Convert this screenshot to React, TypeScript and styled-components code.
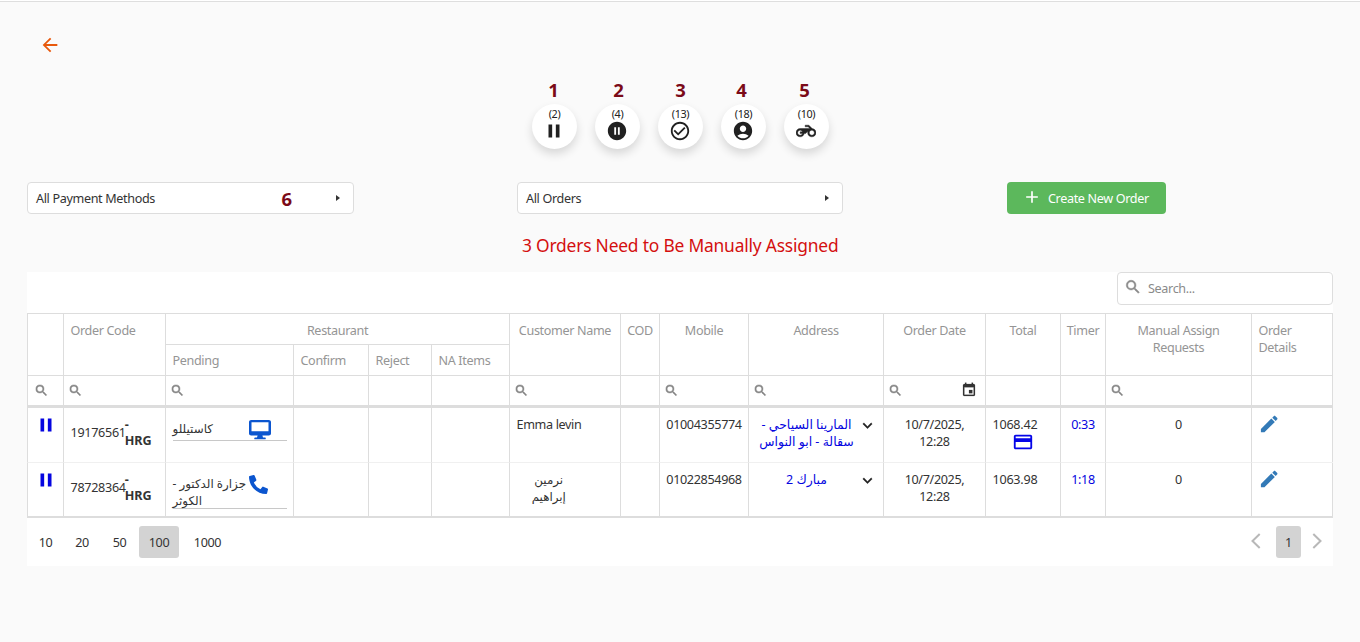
import React from "react";
import styled, { createGlobalStyle } from "styled-components";
import {
  MdPause, MdPauseCircleFilled, MdCheckCircleOutline, MdAccountCircle,
  MdArrowBack, MdSearch, MdEvent, MdOutlineCreditCard, MdExpandMore, MdAdd,
} from "react-icons/md";
import { FaPhoneAlt } from "react-icons/fa";

const Global = createGlobalStyle`
  * { box-sizing: border-box; }
  body { margin: 0; background: #fafafa; }
  svg path[fill="none"] { stroke: none; }
`;

const Page = styled.div`
  height: 642px;
  padding: 0 27px;
  display: flex;
  flex-direction: column;
  background: #fafafa;
  border-top: 1px solid #fff;
  box-shadow: inset 0 1px 0 #dedede;
  overflow: hidden;
  color: #333;
  font: 12.6px/17px "Noto Sans", "DejaVu Sans", sans-serif;
  letter-spacing: -0.35px;
`;

const Back = styled.button`
  align-self: flex-start;
  display: flex;
  margin: 33px 0 0 12px;
  padding: 0;
  border: 0;
  background: none;
  color: #e8590c;
`;

const Statuses = styled.div`
  display: flex;
  gap: 18px;
  margin: 22px 0 0 505px;
`;

const Status = styled.div`
  display: flex;
  flex-direction: column;
  align-items: center;
  width: 45px;
`;

const Mark = styled.span<{ $shift?: number }>`
  font: 700 18.5px/24px "Noto Sans", sans-serif;
  letter-spacing: 0;
  color: #7b0a18;
  position: relative;
  left: ${(p) => p.$shift || 0}px;
`;

const Circle = styled.div`
  display: flex;
  flex-direction: column;
  align-items: center;
  width: 45px;
  height: 45px;
  margin-top: 2px;
  padding-top: 4px;
  border-radius: 50%;
  background: #fff;
  box-shadow: 0 5px 10px rgba(0, 0, 0, 0.14);
  color: #212121;
  font-size: 10.8px;
  line-height: 12px;
  svg { flex: none; margin-right: 1px; }
`;

const Filters = styled.div`
  display: flex;
  align-items: center;
  margin-top: 33px;
`;

const Select = styled.div<{ $width: number; $after: number }>`
  display: flex;
  align-items: center;
  width: ${(p) => p.$width}px;
  height: 32px;
  margin-right: ${(p) => p.$after}px;
  padding: 0 13px 0 8px;
  border: 1px solid #ddd;
  border-radius: 4px;
  background: #fff;
  ${Mark} { margin-right: 44px; padding-top: 2px; }
`;

const Grow = styled.span`
  flex: 1;
`;

const Caret = styled.i`
  border: 3.5px solid transparent;
  border-left: 4px solid #333;
  border-right: 0;
`;

const Create = styled.button`
  display: flex;
  align-items: center;
  gap: 6px;
  width: 159px;
  height: 32px;
  padding: 0 0 0 15px;
  border: 0;
  border-radius: 4px;
  background: #5cb85c;
  color: #fff;
  font: inherit;
  letter-spacing: inherit;
  svg { margin-top: -3px; }
`;

const Alert = styled.h1`
  margin: 19px 0 14px 495px;
  font-size: 17.4px;
  font-weight: 400;
  line-height: 25px;
  letter-spacing: -0.2px;
  color: #d40f0f;
`;

const Panel = styled.section`
  width: 1306px;
  background: #fff;
`;

const Tools = styled.div`
  display: flex;
  justify-content: flex-end;
  height: 41px;
`;

const SearchBox = styled.label`
  display: flex;
  align-items: center;
  gap: 6px;
  width: 216px;
  height: 33px;
  padding-left: 6px;
  border: 1px solid #ddd;
  border-radius: 4px;
  color: #8a8a8a;
  svg { margin-top: -4px; stroke: currentColor; stroke-width: 0.6; }
`;

const Table = styled.div`
  display: grid;
  grid-template-columns: 36px 102px 128px 75px 63px 78px 111px 39px 89px 135px 102px 75px 45px 146px 82px;
  grid-template-rows: 31px 31px 29px 57px 54px;
  border-top: 1px solid #ddd;
  border-bottom: 2px solid #ddd;
  border-right: 1px solid #ddd;
  width: 1306px;
`;

const Head = styled.div<{ $rows?: number; $cols?: number; $align?: string; $sub?: boolean }>`
  grid-row: span ${(p) => p.$rows || 1};
  grid-column: span ${(p) => p.$cols || 1};
  padding: ${(p) => (p.$sub ? 7 : 8)}px 5px 0 ${(p) => (p.$align ? 6.5 : 5)}px;
  border-left: 1px solid #ddd;
  border-bottom: 1px solid #ddd;
  color: #959595;
  text-align: ${(p) => p.$align || "center"};
`;

const Filter = styled.div`
  display: flex;
  align-items: center;
  justify-content: space-between;
  padding: 0 8px 0 4px;
  border-left: 1px solid #ddd;
  color: #858585;
  svg { stroke: currentColor; stroke-width: 0.7; }
  svg + svg { color: #333; stroke-width: 0.3; margin-top: -1px; }
  &:nth-child(17) { padding-left: 6px; }
`;

const Cell = styled.div<{ $first: boolean; $align?: string; $blue?: boolean; $raise?: boolean }>`
  padding: ${(p) => 8 - (p.$raise ? 2 : 0)}px ${(p) => (p.$align ? 5 : 6)}px 0 ${(p) => (p.$align ? 6.5 : 6)}px;
  border-left: 1px solid #ddd;
  ${(p) => (p.$first ? "border-top: 3px solid #ddd;" : "border-top: 1px solid #f0f0f0;")}
  text-align: ${(p) => p.$align || "center"};
  color: ${(p) => (p.$blue ? "#0505e0" : "#333")};
  white-space: nowrap;
`;

const Code = styled.div`
  display: flex;
  padding-top: 8px;
  letter-spacing: -0.3px;
  b { margin: -7px 0 0 -1px; line-height: 16px; width: 28px; letter-spacing: -0.1px; }
`;

const Vendor = styled.div<{ $lines: number }>`
  display: flex;
  justify-content: space-between;
  height: ${(p) => (p.$lines > 1 ? 38 : 25)}px;
  margin-right: 1px;
  padding: 4px 16px 0 0;
  border-bottom: 1px solid #c8c8c8;
  svg { color: #0b55cf; flex: none; }
`;

const Arabic = styled.span<{ $size?: number }>`
  font-family: "Noto Sans", "DejaVu Sans", sans-serif;
  font-size: ${(p) => p.$size || 11.9}px;
  letter-spacing: 0;
`;

const AddressRow = styled.div`
  display: flex;
  justify-content: space-between;
  ${Arabic} { flex: 1; }
  svg { color: #222; stroke: currentColor; stroke-width: 0.3; }
`;

const Customer = styled.div`
  padding-right: 34px;
`;

const Total = styled.div`
  display: flex;
  flex-direction: column;
  letter-spacing: -0.25px;
  svg { margin: -2px 0 0 19px; color: #0505e8; }
`;

const Footer = styled.footer`
  display: flex;
  align-items: center;
  height: 48px;
`;

const PageButton = styled.span<{ $width: number; $on?: boolean }>`
  display: flex;
  align-items: center;
  justify-content: center;
  width: ${(p) => p.$width}px;
  height: 32px;
  border-radius: 3px;
  background: ${(p) => (p.$on ? "#d3d3d3" : "transparent")};
  svg { margin-top: -3px; }
`;

const Chevron = ({ left = false }) => (
  <svg width="10" height="16" viewBox="0 0 10 16" fill="none" stroke="#b8b8b8" strokeWidth="2">
    <path d={left ? "M8.7 1L1.5 8l7.2 7" : "M1.3 1L8.5 8l-7.2 7"} />
  </svg>
);

const Motorcycle = () => (
  <svg width="20" height="22" viewBox="0 0 24 24" fill="currentColor" stroke="currentColor" strokeWidth="0.5">
    <path d="M19.44 9.03L15.41 5H11v2h3.59l2 2H5c-2.8 0-5 2.2-5 5s2.2 5 5 5c2.46 0 4.45-1.69 4.9-4h1.65l2.77-2.77c-.21.54-.32 1.14-.32 1.77 0 2.8 2.2 5 5 5s5-2.2 5-5c0-2.65-1.97-4.77-4.56-4.97zM7.82 15C7.4 16.15 6.28 17 5 17c-1.63 0-3-1.37-3-3s1.37-3 3-3c1.28 0 2.4.85 2.82 2H5v2h2.82zM19 17c-1.66 0-3-1.34-3-3s1.34-3 3-3 3 1.34 3 3-1.34 3-3 3z" />
  </svg>
);

const Monitor = () => (
  <svg width="22" height="20" viewBox="0 0 22 20" fill="currentColor">
    <path fillRule="evenodd" d="M2.2 0h17.6C21 0 22 .9 22 2v11.5c0 1.1-1 2-2.2 2H13.400l.6 2h1.800c.6 0 1 .4 1 .9s-.4.9-1 .9H6.200c-.6 0-1-.4-1-.9s.4-.9 1-.9H8l.6-2H2.200C1 15.500 0 14.600 0 13.500V2C0 .9 1 0 2.200 0zM2.500 2.200v9h17v-9z" />
  </svg>
);

const Phone = () => <FaPhoneAlt size={19} style={undefined} />;

const Pencil = () => (
  <svg width="21" height="21" viewBox="0 0 22 22" fill="#337ab7">
    <path d="M2 15.600L12.900 4.800l3.700 3.600L5.700 19.200H2zM13.900 3.800l1.500-1.500c.6-.6 1.200-.6 1.800 0l1.700 1.700c.6.6.6 1.200 0 1.800l-1.400 1.500z" />
  </svg>
);

const VendorRow = styled(Vendor)`
  padding-right: ${(p) => (p.$lines > 1 ? 19 : 16)}px;
`;

const statuses = [
  { n: 1, count: 2, icon: <MdPause size={22} />, shift: -1 },
  { n: 2, count: 4, icon: <MdPauseCircleFilled size={22} />, shift: 1 },
  { n: 3, count: 13, icon: <MdCheckCircleOutline size={22} />, shift: 0 },
  { n: 4, count: 18, icon: <MdAccountCircle size={22} />, shift: -2 },
  { n: 5, count: 10, icon: <Motorcycle />, shift: -2 },
];

const filters = [1, 1, 1, 0, 0, 0, 1, 0, 1, 1, 2, 0, 0, 1, 0];

const orders = [
  {
    code: "19176561", vendor: ["كاستيللو"], Contact: Monitor, customer: <>Emma levin</>, left: true,
    mobile: "01004355774", address: ["المارينا السياحي -", "سقالة - ابو النواس"], total: "1068.42", card: true, timer: "0:33",
  },
  {
    code: "78728364", vendor: ["جزارة الدكتور -", "الكوثر"], Contact: Phone,
    customer: <Customer><Arabic dir="rtl">نرمين<br />إبراهيم</Arabic></Customer>, left: false,
    mobile: "01022854968", address: ["مبارك 2"], total: "1063.98", card: false, timer: "1:18",
  },
];

const lines = (items: string[]) => items.map((t, i) => <React.Fragment key={t}>{i > 0 && <br />}{t}</React.Fragment>);

export default function App() {
  return (
    <Page>
      <Global />
      <Back aria-label="Back"><MdArrowBack size={22} /></Back>
      <Statuses>
        {statuses.map(({ n, count, icon, shift }) => (
          <Status key={n}>
            <Mark $shift={shift}>{n}</Mark>
            <Circle>({count}){icon}</Circle>
          </Status>
        ))}
      </Statuses>
      <Filters>
        <Select $width={327} $after={163}>All Payment Methods<Grow /><Mark>6</Mark><Caret /></Select>
        <Select $width={326} $after={164}>All Orders<Grow /><Caret /></Select>
        <Create><MdAdd size={20} />Create New Order</Create>
      </Filters>
      <Alert>3 Orders Need to Be Manually Assigned</Alert>
      <Panel>
        <Tools><SearchBox><MdSearch size={18} />Search...</SearchBox></Tools>
        <Table>
          <Head $rows={2} />
          <Head $rows={2} $align="left">Order Code</Head>
          <Head $cols={4}>Restaurant</Head>
          <Head $rows={2}>Customer Name</Head>
          <Head $rows={2}>COD</Head>
          <Head $rows={2}>Mobile</Head>
          <Head $rows={2}>Address</Head>
          <Head $rows={2}>Order Date</Head>
          <Head $rows={2}>Total</Head>
          <Head $rows={2}>Timer</Head>
          <Head $rows={2}>Manual Assign<br />Requests</Head>
          <Head $rows={2} $align="left">Order<br />Details</Head>
          <Head $align="left" $sub>Pending</Head>
          <Head $align="left" $sub>Confirm</Head>
          <Head $align="left" $sub>Reject</Head>
          <Head $align="left" $sub>NA Items</Head>
          {filters.map((f, i) => (
            <Filter key={i}>{f > 0 && <MdSearch size={15} />}{f > 1 && <MdEvent size={16} />}</Filter>
          ))}
          {orders.map((o, i) => {
            const first = i === 0;
            return (
              <React.Fragment key={o.code}>
                <Cell $first={first} $blue $raise><MdPause size={22} /></Cell>
                <Cell $first={first} $align="left"><Code>{o.code}<b>-<br />HRG</b></Code></Cell>
                <Cell $first={first} $align="left">
                  <VendorRow $lines={o.vendor.length}><Arabic dir="rtl">{lines(o.vendor)}</Arabic><o.Contact /></VendorRow>
                </Cell>
                <Cell $first={first} /><Cell $first={first} /><Cell $first={first} />
                <Cell $first={first} $align={o.left ? "left" : "center"}>{o.customer}</Cell>
                <Cell $first={first} />
                <Cell $first={first}>{o.mobile}</Cell>
                <Cell $first={first} $blue><AddressRow><Arabic dir="rtl" $size={12.5}>{lines(o.address)}</Arabic><MdExpandMore size={19} /></AddressRow></Cell>
                <Cell $first={first}>10/7/2025,<br />12:28</Cell>
                <Cell $first={first} $align="left"><Total>{o.total}{o.card && <MdOutlineCreditCard size={22} />}</Total></Cell>
                <Cell $first={first} $blue>{o.timer}</Cell>
                <Cell $first={first}>0</Cell>
                <Cell $first={first} $align="left" $raise><Pencil /></Cell>
              </React.Fragment>
            );
          })}
        </Table>
        <Footer>
          <PageButton $width={37}>10</PageButton>
          <PageButton $width={36}>20</PageButton>
          <PageButton $width={39}>50</PageButton>
          <PageButton $width={40} $on>100</PageButton>
          <PageButton $width={57}>1000</PageButton>
          <Grow />
          <PageButton $width={40}><Chevron left /></PageButton>
          <PageButton $width={25} $on>1</PageButton>
          <PageButton $width={32}><Chevron /></PageButton>
        </Footer>
      </Panel>
    </Page>
  );
}
